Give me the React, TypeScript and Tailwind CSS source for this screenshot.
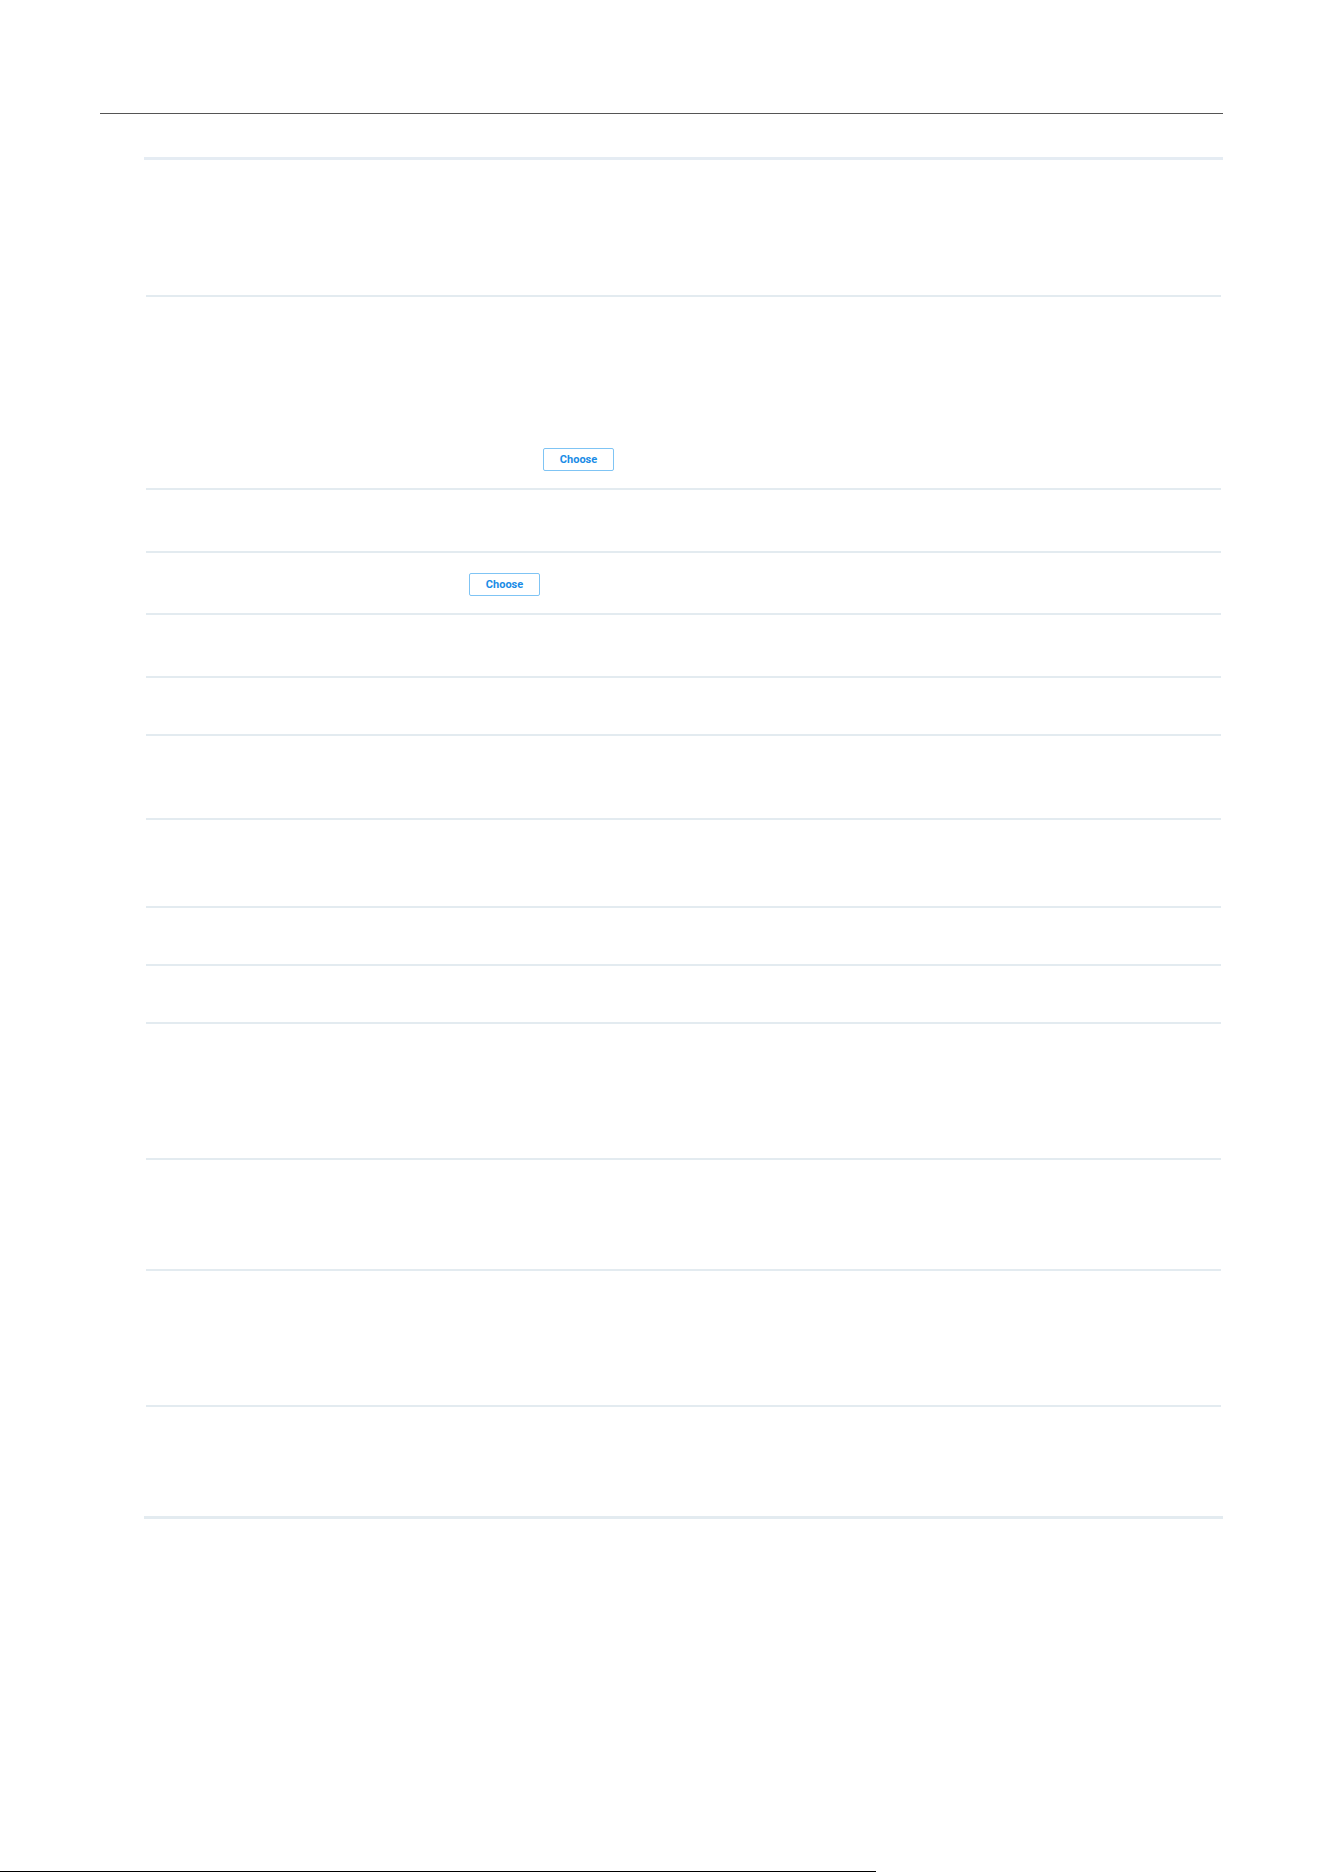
const rows: { h: number; button?: { left: number; top: number } }[] = [
  { h: 135 },
  { h: 191, button: { left: 397, top: 148 } },
  { h: 61 },
  { h: 60, button: { left: 323, top: 17 } },
  { h: 61 },
  { h: 56 },
  { h: 82 },
  { h: 86 },
  { h: 56 },
  { h: 56 },
  { h: 134 },
  { h: 109 },
  { h: 134 },
  { h: 109 },
];

function ChooseButton() {
  return (
    <button
      type="button"
      className="h-[23px] w-[71px] rounded-[2px] border border-[#7fc4f4] bg-white text-[11px] font-bold leading-none text-[#1a8ce6]"
      style={{ fontFamily: 'Roboto, "Liberation Sans", sans-serif' }}
    >
      Choose
    </button>
  );
}

export default function App() {
  return (
    <div className="flex h-[1872px] flex-col bg-white">
      <div className="ml-[100px] mt-[113px] w-[1123px] border-t border-[#555555]">
        <div className="ml-[44px] mt-[43px]">
          <div className="h-[3px] w-[1079px] bg-[#e5ecf3]" />
          {rows.map((row, i) => (
            <div key={i} className="ml-[2px] w-[1075px]">
              <div className="flex" style={{ height: row.h }}>
                {row.button && (
                  <div style={{ paddingLeft: row.button.left, paddingTop: row.button.top }}>
                    <ChooseButton />
                  </div>
                )}
              </div>
              {i < rows.length - 1 && <div className="h-[2px] bg-[#e3ebf0]" />}
            </div>
          ))}
          <div className="h-[3px] w-[1079px] bg-[#e3ebf0]" />
        </div>
      </div>
      <div className="mt-auto h-px w-[876px] bg-black" />
    </div>
  );
}
